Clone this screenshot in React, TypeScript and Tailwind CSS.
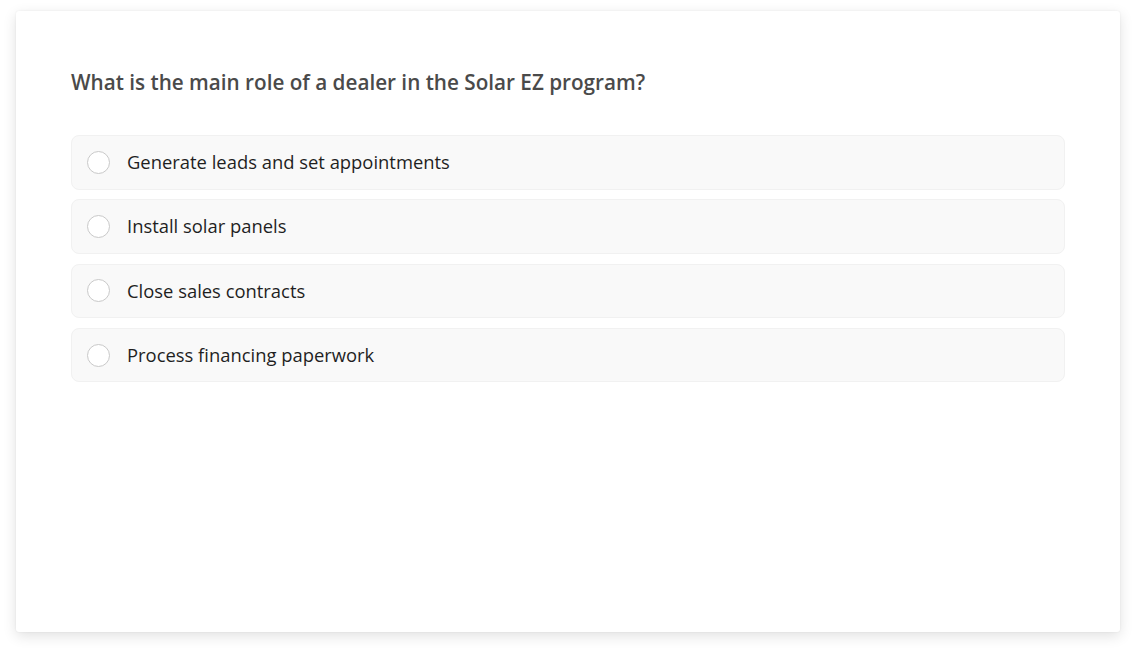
import React from "react";

const options = [
  "Generate leads and set appointments",
  "Install solar panels",
  "Close sales contracts",
  "Process financing paperwork",
];

export default function App() {
  return (
    <div
      className="w-[1136px] h-[653px] bg-white pt-[11px] pl-[16px] pr-[16px]"
      style={{ fontFamily: '"Open Sans", "Noto Sans", sans-serif' }}
    >
      <div className="w-[1104px] h-[621px] bg-white rounded-[3px] shadow-[0_4px_14px_rgba(0,0,0,0.12),0_0_2px_rgba(0,0,0,0.08)] pt-[56px] px-[55px]">
        <h1 className="text-[20.7px] leading-[30px] font-semibold text-[#4a4a4a]">
          What is the main role of a dealer in the Solar EZ program?
        </h1>
        <div className="mt-[38px] flex flex-col gap-[9.83px]">
          {options.map((o) => (
            <div
              key={o}
              className="h-[54.5px] bg-[#f9f9f9] border border-[#f1f1f1] rounded-[8px] flex items-center pl-[15px] pr-[15px]"
            >
              <span className="w-[23px] h-[23px] rounded-full border-[1.5px] border-[#c9c9c9] bg-white shrink-0" />
              <span className="ml-[17px] text-[18.4px] text-[#1f1f1f] leading-none">{o}</span>
            </div>
          ))}
        </div>
      </div>
    </div>
  );
}
